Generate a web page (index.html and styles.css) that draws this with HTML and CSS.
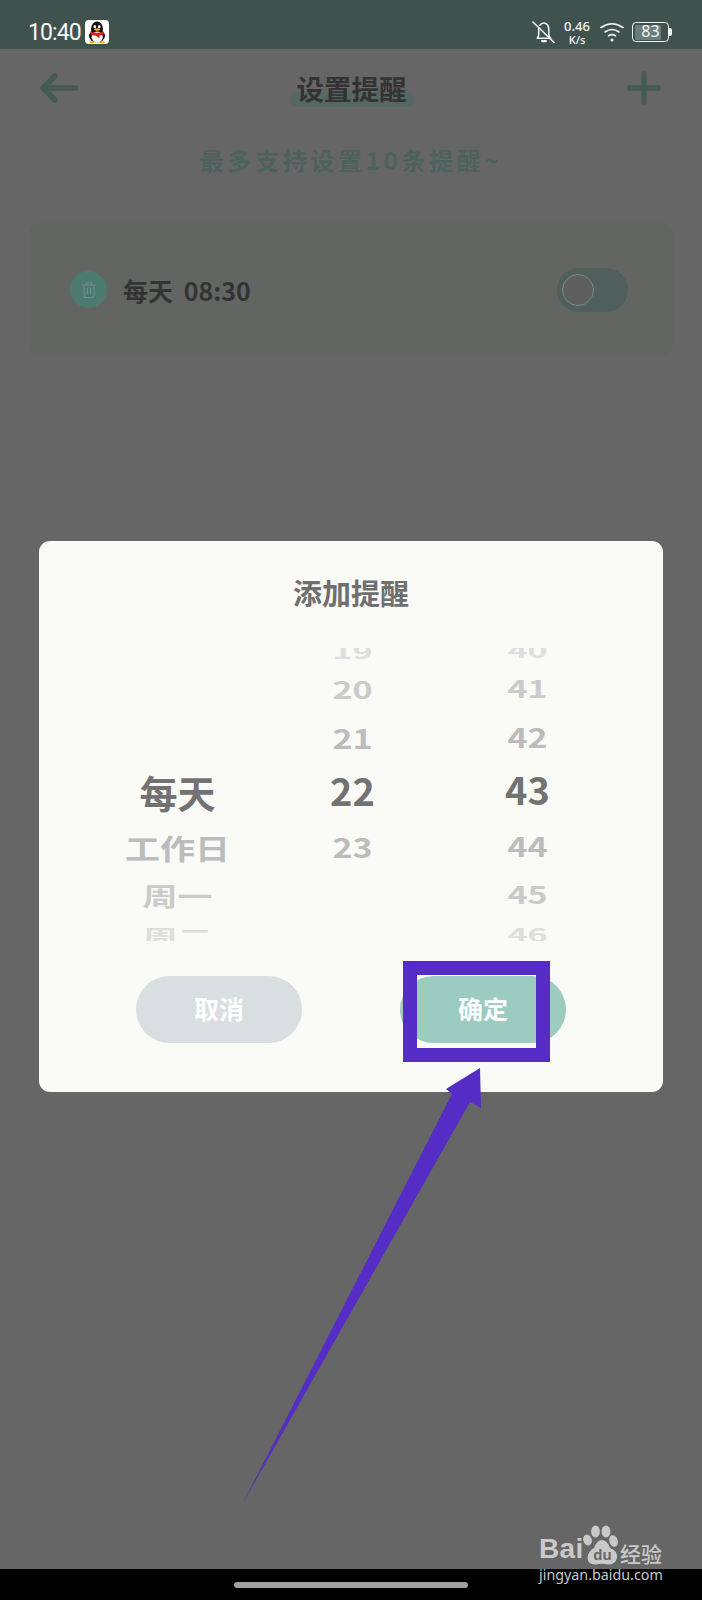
FILE: index.html
```html
<!DOCTYPE html>
<html lang="zh">
<head>
<meta charset="utf-8">
<title>设置提醒</title>
<link rel="stylesheet" href="styles.css">
</head>
<body>
<div class="page">
  <div class="status">
    <span class="time">10:40</span>
    <svg class="qq" viewBox="0 0 24 24">
      <rect width="24" height="24" rx="4" fill="#fff"/>
      <ellipse cx="12" cy="9" rx="6" ry="7.5" fill="#111"/>
      <ellipse cx="12" cy="16" rx="8" ry="6.5" fill="#111"/>
      <ellipse cx="12.2" cy="17" rx="5.6" ry="5.5" fill="#fff"/>
      <ellipse cx="9.8" cy="6.8" rx="1.3" ry="1.7" fill="#fff"/>
      <ellipse cx="14.2" cy="6.8" rx="1.3" ry="1.7" fill="#fff"/>
      <ellipse cx="12" cy="9.6" rx="3" ry="1.3" fill="#e8a317"/>
      <path d="M5.5 11.5Q12 14 18.5 11.5L19 14Q16 15.5 14.5 15.5L14.5 18.5L11.5 16L5.5 14.5Z" fill="#d6201f"/>
      <ellipse cx="7" cy="22.2" rx="3" ry="1" fill="#e8a317"/>
      <ellipse cx="17" cy="22.2" rx="3" ry="1" fill="#e8a317"/>
    </svg>
    <div class="status-right">
      <svg class="bell" viewBox="0 0 24 24" fill="none" stroke="#f2f5f4" stroke-width="1.6" stroke-linecap="round" stroke-linejoin="round">
        <path d="M5.5 18.5H19.5Q17.5 16.5 17.5 14V9.5Q17.5 3 12.5 2.5Q9.5 2.5 8 5M7 8.5V14Q7 16.5 5.5 18.5"/>
        <path d="M10.5 21.5H14.5" stroke-width="2.2"/>
        <path d="M1 1.5L23 23"/>
      </svg>
      <div class="speed"><span class="speed-num">0.46</span><span class="speed-unit">K/s</span></div>
      <svg class="wifi" viewBox="0 0 24 20" fill="none" stroke="#f2f5f4" stroke-width="1.6" stroke-linecap="round">
        <path d="M1 5.5Q12 -2 23 5.5"/>
        <path d="M5 10Q12 5 19 10"/>
        <path d="M8.5 13.8Q12 11.5 15.5 13.8"/>
        <circle cx="12" cy="18" r="1.5" fill="#f2f5f4" stroke="none"/>
      </svg>
      <div class="battery">
        <div class="battery-body"><span class="battery-fill"></span><span class="battery-num">83</span></div>
        <span class="battery-cap"></span>
      </div>
    </div>
  </div>

  <main class="main">
    <header class="header">
      <svg class="icon-back" viewBox="0 0 38 30" fill="none" stroke="#435a55" stroke-width="5.4" stroke-linecap="round" stroke-linejoin="round">
        <path d="M36 15H4M15 3L3 15L15 27"/>
      </svg>
      <h1 class="title"><span class="title-text">设置提醒</span></h1>
      <svg class="icon-plus" viewBox="0 0 34 34" fill="none" stroke="#435a55" stroke-width="5.4" stroke-linecap="round">
        <path d="M17 3V31M3 17H31"/>
      </svg>
    </header>
    <p class="subtitle">最多支持设置10条提醒~</p>
    <section class="card">
      <span class="trash">
        <svg viewBox="0 0 20 20" fill="none" stroke="#6f8f86" stroke-width="1.1">
          <path d="M3 5H17M7.5 5V3H12.5V5M5 5V16Q5 17.5 6.5 17.5H13.5Q15 17.5 15 16V5M8.5 8V14.5M11.5 8V14.5"/>
        </svg>
      </span>
      <span class="card-text">每天 08:30</span>
      <span class="toggle"><span class="knob"></span></span>
    </section>
  </main>

  <div class="navbar"><span class="home"></span></div>
</div>

<div class="dialog">
  <h2 class="dialog-title">添加提醒</h2>
  <div class="wheel">
    <div class="col col-repeat">
      <div class="row sel">每天</div>
      <div class="row near">工作日</div>
      <div class="row mid low">周一</div>
      <div class="row far low">周二</div>
    </div>
    <div class="col col-hour">
      <div class="row far">19</div>
      <div class="row mid">20</div>
      <div class="row near">21</div>
      <div class="row sel">22</div>
      <div class="row near">23</div>
    </div>
    <div class="col col-minute">
      <div class="row far">40</div>
      <div class="row mid">41</div>
      <div class="row near">42</div>
      <div class="row sel">43</div>
      <div class="row near">44</div>
      <div class="row mid low">45</div>
      <div class="row far low">46</div>
    </div>
  </div>
  <div class="actions">
    <button class="btn btn-cancel">取消</button>
    <button class="btn btn-ok">确定</button>
  </div>
</div>

<div class="mark-box"></div>
<svg class="mark-arrow" viewBox="0 0 702 1600">
  <polygon points="480,1068 481,1108 470,1102 243,1503 452,1094 446,1089" fill="#552cc5"/>
</svg>

<div class="watermark">
  <div class="wm-top">
    <span class="wm-bai">Bai</span>
    <svg class="wm-paw" viewBox="0 0 38 40">
      <ellipse cx="5.5" cy="15" rx="4.2" ry="5.6" fill="#c9c9c9" transform="rotate(-18 5.5 15)"/>
      <ellipse cx="13.5" cy="6.5" rx="4.4" ry="6" fill="#c9c9c9"/>
      <ellipse cx="24" cy="6.5" rx="4.4" ry="6" fill="#c9c9c9"/>
      <ellipse cx="31.5" cy="16" rx="4.2" ry="6" fill="#c9c9c9" transform="rotate(-18 31.5 16)"/>
      <path d="M20 15Q25 15 28 23Q36 26 35 33Q33 40 26 39.5Q20 38 14 39.5Q6 40 5.5 33Q6 26 12 23Q15 15 20 15Z" fill="#c9c9c9"/>
      <text x="20.5" y="35" text-anchor="middle" class="wm-du">du</text>
    </svg>
    <span class="wm-cn">经验</span>
  </div>
  <div class="wm-url">jingyan.baidu.com</div>
</div>
</body>
</html>
```
FILE: styles.css
```css
* { box-sizing: border-box; }
html, body { margin: 0; padding: 0; }
body {
  width: 702px;
  height: 1600px;
  position: relative;
  overflow: hidden;
  background: #666;
  font-family: "Noto Sans CJK SC", "Noto Sans", sans-serif;
}
.page { height: 1600px; display: flex; flex-direction: column; }

.status {
  height: 49px;
  flex: none;
  background: #40524e;
  display: flex;
  align-items: center;
  padding: 15px 30px 0 28px;
  color: #f5f7f6;
}
.time { font-family: Roboto, sans-serif; font-size: 23px; font-weight: 400; line-height: 28px; letter-spacing: -0.9px; padding-top: 1px; }
.qq { width: 24px; height: 24px; margin-left: 4px; }
.status-right { margin-left: auto; display: flex; align-items: center; }
.bell { width: 23px; height: 24px; }
.speed { display: flex; flex-direction: column; align-items: center; width: 26px; margin-left: 9px; font-family: "Noto Sans", sans-serif; }
.speed-num { font-size: 13px; line-height: 14px; font-weight: 500; }
.speed-unit { font-size: 11px; line-height: 13px; font-weight: 500; }
.wifi { width: 24px; height: 20px; margin-left: 10px; }
.battery { display: flex; align-items: center; margin-left: 8px; }
.battery-body {
  width: 37px; height: 20px; border: 1.5px solid #eef1f0; border-radius: 4px; padding: 1.5px;
  position: relative;
}
.battery-fill { display: block; width: 26px; height: 100%; background: #6a7d78; border-radius: 1px; }
.battery-num {
  position: absolute; left: 0; right: 0; top: 0; text-align: center;
  font-family: "Noto Sans", sans-serif; font-size: 16px; line-height: 17px;
}
.battery-cap { width: 3px; height: 8px; background: #eef1f0; border-radius: 0 2px 2px 0; }

.main { flex: 1; }
.header {
  height: 78px; display: flex; align-items: center; justify-content: space-between;
  padding: 0 41px 0 40px;
}
.icon-back { width: 38px; height: 30px; }
.icon-plus { width: 34px; height: 34px; }
.title { margin: 0; font-size: 27.5px; line-height: 36px; font-weight: 700; color: #333; }
.title-text { position: relative; display: block; padding: 0 7px; z-index: 0; left: -1px; }
.title-text::after {
  content: ""; position: absolute; left: 0; right: 0; height: 15px;
  top: 22px; background: #566864; border-radius: 8px; z-index: -1;
}
.subtitle {
  margin: 0; height: 68px; line-height: 66px; text-align: center;
  font-size: 24px; font-weight: 700; letter-spacing: 3.7px; color: #4d625d;
}
.card {
  margin: 28px 29px 0; height: 133px; background: #636563; border-radius: 12px;
  display: flex; align-items: center; padding: 0 45px 0 41px;
}
.trash {
  width: 37px; height: 37px; border-radius: 50%; background: #4d7a6e;
  display: flex; align-items: center; justify-content: center;
}
.trash svg { width: 20px; height: 20px; }
.card-text { margin-left: 16px; font-size: 25px; font-weight: 700; line-height: 34px; word-spacing: 5px; color: #333; }
.toggle {
  margin-left: auto; width: 71px; height: 44px; border-radius: 22px; background: #4f5f5b;
  display: flex; align-items: center; padding-left: 5px;
}
.knob { width: 32px; height: 32px; border-radius: 50%; background: #5f5f5f; border: 1px solid #788884; }

.navbar { height: 31px; flex: none; background: #000; display: flex; justify-content: center; padding-top: 13px; }
.home { width: 234px; height: 6px; border-radius: 3px; background: #a0a0a0; }

.dialog {
  position: absolute; left: 39px; top: 541px; width: 624px; height: 551px;
  background: #fafaf6; border-radius: 11px; display: flex; flex-direction: column; align-items: stretch;
}
.dialog-title {
  margin: 0; height: 107px; padding-top: 30px; text-align: center; color: #6f6f6f;
  font-size: 29px; font-weight: 700; line-height: 42px;
}
.wheel {
  height: 293px; overflow: hidden; display: grid; grid-template-columns: repeat(3, 175px);
  padding: 0 48px 0 51px;
}
.col { display: flex; flex-direction: column; align-items: center; }
.col-repeat { margin-top: 119px; }
.col-repeat .sel { margin-bottom: -1px; }
.col-hour { margin-top: -13px; }
.col-minute { margin-top: -14px; }
.row { font-weight: 700; text-align: center; white-space: nowrap; }
.sel { height: 55px; line-height: 50px; font-size: 38px; color: #727272; }
.near { height: 54px; line-height: 54px; font-size: 34px; color: #bcbcbc; transform: scaleY(0.8); }
.mid { height: 44px; line-height: 44px; font-size: 34px; color: #cacaca; transform: scaleY(0.7); }
.far { height: 32px; line-height: 32px; font-size: 34px; color: #dedede; transform: scaleY(0.55); }
.mid.low { height: 42px; line-height: 42px; }
.far.low { height: 38px; line-height: 38px; }
.col-repeat .near, .col-repeat .mid, .col-repeat .far { font-size: 35px; }

.actions { display: flex; justify-content: center; gap: 98px; padding-top: 35px; }
.btn {
  width: 166px; height: 67px; border: 0; border-radius: 34px; color: #fff;
  font-family: inherit; font-size: 25px; font-weight: 700; line-height: 65px; padding: 0 0 2px;
}
.btn-cancel { background: #d9dee0; }
.btn-ok { background: #9ccbbf; }

.mark-box {
  position: absolute; left: 403px; top: 961px; width: 147px; height: 101px; border: 14px solid #552cc5;
}
.mark-arrow { position: absolute; left: 0; top: 0; width: 702px; height: 1600px; pointer-events: none; }

.watermark { position: absolute; left: 539px; top: 1525px; width: 126px; color: #c9c9c9; }
.wm-top { display: flex; align-items: flex-end; height: 40px; }
.wm-bai { font-family: "Liberation Sans", sans-serif; font-weight: 700; font-size: 28px; line-height: 33px; letter-spacing: 0.3px; flex: none; width: 43px; }
.wm-paw { width: 38px; height: 40px; flex: none; }
.wm-du { font-family: "Liberation Sans", sans-serif; font-size: 15px; font-weight: 700; fill: #666; }
.wm-cn { font-size: 21px; line-height: 26px; font-weight: 500; flex: none; margin-bottom: -1px; }
.wm-url { font-family: "Noto Sans", sans-serif; font-size: 14.3px; line-height: 18px; white-space: nowrap; margin-top: 1px; }
```
